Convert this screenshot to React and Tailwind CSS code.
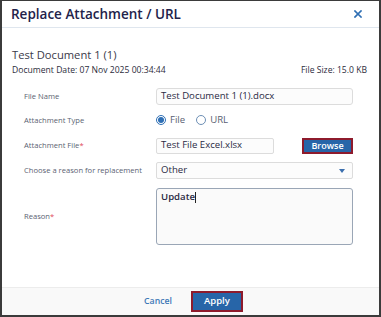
import React from "react";

export default function App() {
  const font = { fontFamily: '"Open Sans", "Noto Sans", sans-serif' };
  return (
    <div
      style={font}
      className="w-[381px] h-[317px] bg-white border-l-2 border-r-2 border-t border-b-2 border-[#3b3b3b] flex flex-col overflow-hidden"
    >
      {/* header */}
      <div className="h-[27px] flex items-center justify-between pl-[9px] pr-[17px] border-b border-[#dfe6ee] shrink-0">
        <div className="text-[13.5px] font-semibold text-[#22224a] leading-none mt-[1px]">Replace Attachment / URL</div>
        <svg width="8" height="8" viewBox="0 0 8 8" className="mt-[-1px]">
          <path d="M1 1 L7 7 M7 1 L1 7" stroke="#2f6fb3" strokeWidth="1.7" strokeLinecap="square" />
        </svg>
      </div>

      {/* body */}
      <div className="flex-1 pl-[10px] pr-[12px] pt-[19px]">
        <div className="text-[11.2px] text-[#3a3a4a] leading-[15px]">Test Document 1 (1)</div>
        <div className="flex justify-between text-[8.6px] text-[#2c2c3c] leading-[12px] mt-[2px]">
          <span>Document Date: 07 Nov 2025 00:34:44</span>
          <span>File Size: 15.0 KB</span>
        </div>

        <div className="mt-[12px] pl-[12px] pr-[14px] flex flex-col">
          {/* File Name */}
          <div className="flex items-center h-[17px]">
            <div className="w-[132px] text-[7.6px] text-[#5b5f72]">File Name</div>
            <div className="flex-1 h-[17px] border border-[#dcdcdc] rounded-[3px] bg-[#fcfcfc] pl-[4px] flex items-center text-[9.6px] text-[#2a2a44]">
              Test Document 1 (1).docx
            </div>
          </div>

          {/* Attachment Type */}
          <div className="flex items-center h-[17px] mt-[7px]">
            <div className="w-[132px] text-[7.6px] text-[#5b5f72]">Attachment Type</div>
            <div className="flex items-center text-[9.6px] text-[#5a5f72]">
              <span className="w-[10px] h-[10px] rounded-full border border-[#2e6fb5] flex items-center justify-center">
                <span className="w-[6px] h-[6px] rounded-full bg-[#2e6fb5]"></span>
              </span>
              <span className="ml-[4px]">File</span>
              <span className="ml-[11px] w-[10px] h-[10px] rounded-full border border-[#6d8fb5]"></span>
              <span className="ml-[4px]">URL</span>
            </div>
          </div>

          {/* Attachment File */}
          <div className="flex items-center h-[17px] mt-[8px]">
            <div className="w-[132px] text-[7.6px] text-[#5b5f72]">
              Attachment File<span className="text-[#e0485a]">*</span>
            </div>
            <div className="w-[118px] h-[16px] border border-[#dcdcdc] rounded-[2px] bg-[#fcfcfc] pl-[4px] flex items-center text-[9.6px] text-[#2a2a44]">
              Test File Excel.xlsx
            </div>
            <div className="ml-auto w-[51px] h-[16px] border-2 border-[#8e1b2c] bg-[#2765a8] flex items-center justify-center text-[9px] font-semibold text-white">
              Browse
            </div>
          </div>

          {/* Reason select */}
          <div className="flex items-center h-[17px] mt-[8px]">
            <div className="w-[132px] text-[7.6px] text-[#5b5f72]">Choose a reason for replacement</div>
            <div className="flex-1 h-[17px] border border-[#dcdcdc] rounded-[2px] bg-[#fcfcfc] pl-[4px] pr-[7px] flex items-center justify-between text-[9.6px] text-[#2a2a44]">
              <span>Other</span>
              <svg width="6" height="4" viewBox="0 0 6 4">
                <path d="M0 0 L6 0 L3 4 Z" fill="#3b6fae" />
              </svg>
            </div>
          </div>

          {/* Reason textarea */}
          <div className="flex items-center mt-[9px]">
            <div className="w-[132px] text-[7.6px] text-[#5b5f72]">
              Reason<span className="text-[#e0485a]">*</span>
            </div>
            <div className="flex-1 h-[57px] border border-[#9aa6b6] rounded-[3px] bg-[#fafafa] pl-[4px] pt-[1px] text-[9.6px] text-[#2a2a44] font-semibold leading-[13px]">
              Update<span className="inline-block w-[1px] h-[11px] bg-[#222] align-middle"></span>
            </div>
          </div>
        </div>
      </div>

      {/* footer */}
      <div className="h-[28px] shrink-0 border-t border-[#ececec] bg-[#f9f9f9] flex items-center justify-center">
        <span className="text-[8.7px] font-semibold text-[#3d78b7] mr-[19px] ml-[6px]">Cancel</span>
        <div className="w-[52px] h-[21px] border-2 border-[#8e1b2c] bg-[#2765a8] flex items-center justify-center text-[9.5px] font-semibold text-white">
          Apply
        </div>
      </div>
    </div>
  );
}
